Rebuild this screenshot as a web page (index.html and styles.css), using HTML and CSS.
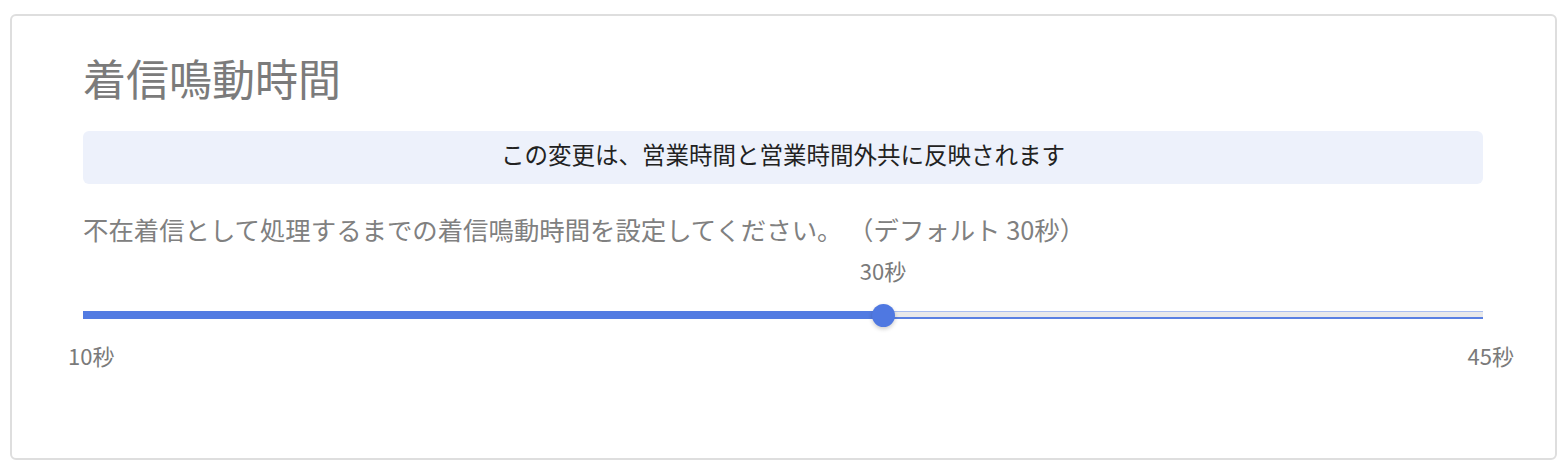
FILE: index.html
```html
<!DOCTYPE html>
<html lang="ja">
<head>
<meta charset="UTF-8" />
<meta name="viewport" content="width=device-width, initial-scale=1.0" />
<title>着信鳴動時間</title>
<link rel="stylesheet" href="styles.css">
</head>
<body>
<div class="card">
<!-- 見出し -->
<h1 class="card-title">着信鳴動時間</h1>
<!-- お知らせ -->
<div class="notice">この変更は、営業時間と営業時間外共に反映されます</div>
<!-- 説明 -->
<p class="desc">不在着信として処理するまでの着信鳴動時間を設定してください。 （デフォルト 30秒）</p>
<!-- スライダー -->
<div class="slider" style="--pos: 57.14%">
<div class="slider-value-row">
    <span class="slider-value">30秒</span>
</div>
<div class="slider-track">
    <div class="slider-fill"></div>
    <div class="slider-rest"></div>
    <span class="slider-thumb"></span>
</div>
<div class="slider-labels">
    <span>10秒</span>
    <span>45秒</span>
</div>
</div>
</div>
</body>
</html>
```

FILE: styles.css
```css
/* === 基本 === */
body {
  margin: 0;
  background-color: #fff;
  font-family: "Noto Sans CJK JP", "Noto Sans", sans-serif;
}
/* === カード === */
.card {
  margin: 14px 11px 12px 10px;
  height: 446px;
  box-sizing: border-box;
  border: 2px solid #dedede;
  border-radius: 6px;
  padding: 36px 72px 0 71px;
}
.card-title {
  margin: 0;
  font-size: 43px;
  line-height: 50px;
  font-weight: normal;
  color: #7b7b7b;
}
/* === お知らせ帯 === */
.notice {
  margin-top: 29px;
  padding: 10px 0 16px;
  line-height: 27px;
  font-size: 23.5px;
  color: #222;
  text-align: center;
  background-color: #edf1fb;
  border-radius: 6px;
}
.desc {
  margin: 27px 0 0;
  font-size: 25.4px;
  line-height: 36px;
  color: #808080;
}
/* === スライダー === */
.slider {
  margin-top: 8px;
}
.slider-value-row {
  position: relative;
  height: 30px;
}
.slider-value {
  position: absolute;
  left: var(--pos);
  transform: translateX(-50%);
  font-size: 22px;
  line-height: 30px;
  color: #7a7a7a;
  white-space: nowrap;
}
.slider-track {
  position: relative;
  display: flex;
  align-items: center;
  height: 22px;
  margin-top: 19px;
}
.slider-fill {
  width: var(--pos);
  height: 8px;
  background-color: #527be2;
}
.slider-rest {
  flex: 1;
  height: 8px;
  box-sizing: border-box;
  background-color: #e9e9ea;
  border-top: 1px solid #aabef0;
  border-bottom: 2px solid #5a80e2;
}
.slider-thumb {
  position: absolute;
  left: var(--pos);
  top: 0;
  width: 23px;
  height: 23px;
  margin-left: -11px;
  border-radius: 50%;
  background-color: #4f78e1;
  box-shadow: 0 2px 4px rgba(0, 0, 0, 0.2);
}
.slider-labels {
  display: flex;
  justify-content: space-between;
  margin: 14px -31px 0 -15px;
  font-size: 22px;
  line-height: 30px;
  color: #7a7a7a;
}
```
